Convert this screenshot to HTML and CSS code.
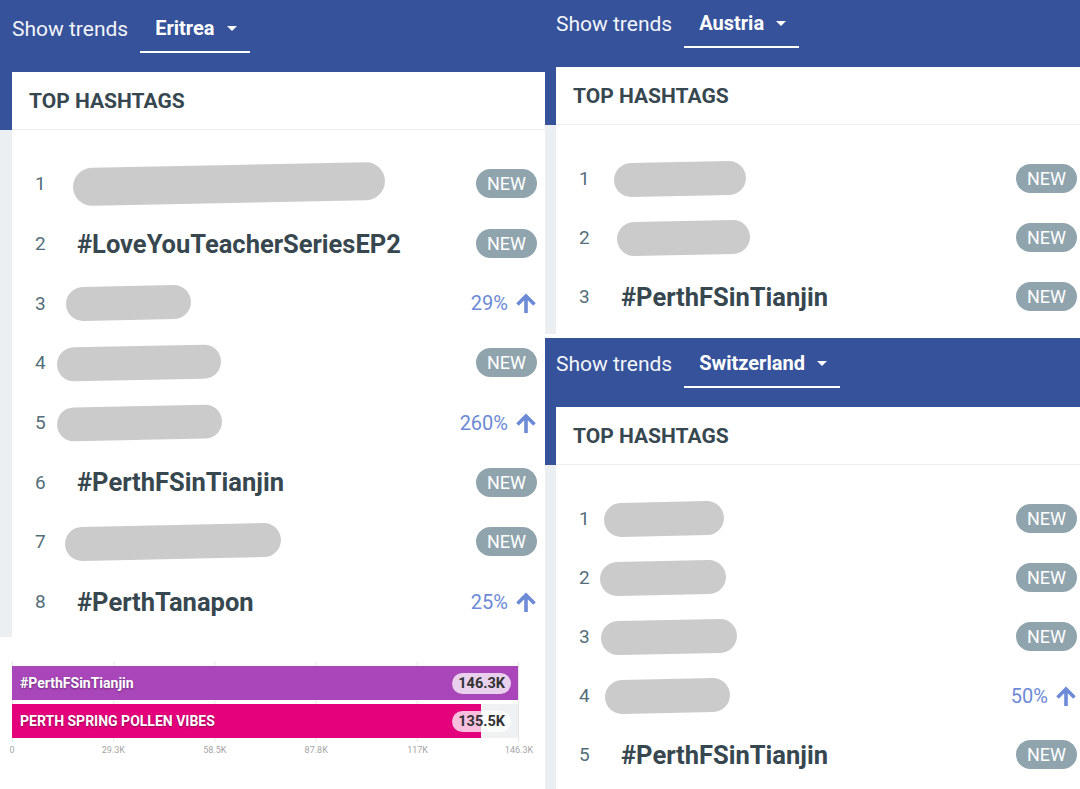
FILE: index.html
```html
<!DOCTYPE html>
<html>
<head>
	<title>Hashtag trends</title>
	<meta name="viewport" content="width=device-width, initial-scale=1">
	<link rel="stylesheet" href="styles.css">
</head>
<body>
<div class="collage">

	<!-- Left column: Eritrea + chart -->
	<div class="col col-left">
		<div class="panel panel-eritrea">
			<div class="topbar">
				<span class="show">Show trends</span>
				<span class="tab">Eritrea <i class="caret"></i></span>
			</div>
			<div class="card">
				<div class="card-head">TOP HASHTAGS</div>
				<div class="card-body">
					<div class="row"><span class="num">1</span><span class="blob" style="--x:-4px;--w:312px;--h:38px"></span><span class="badge">NEW</span></div>
					<div class="row"><span class="num">2</span><span class="tag">#LoveYouTeacherSeriesEP2</span><span class="badge">NEW</span></div>
					<div class="row"><span class="num">3</span><span class="blob" style="--x:-11px;--w:125px"></span><span class="trend">29% <svg viewBox="0 0 22 22"><path d="M11 21V4M2.5 12.5L11 4l8.5 8.5"/></svg></span></div>
					<div class="row"><span class="num">4</span><span class="blob" style="--x:-20px;--w:164px"></span><span class="badge">NEW</span></div>
					<div class="row"><span class="num">5</span><span class="blob" style="--x:-20px;--w:165px"></span><span class="trend">260% <svg viewBox="0 0 22 22"><path d="M11 21V4M2.5 12.5L11 4l8.5 8.5"/></svg></span></div>
					<div class="row"><span class="num">6</span><span class="tag">#PerthFSinTianjin</span><span class="badge">NEW</span></div>
					<div class="row"><span class="num">7</span><span class="blob" style="--x:-12px;--w:216px"></span><span class="badge">NEW</span></div>
					<div class="row"><span class="num">8</span><span class="tag">#PerthTanapon</span><span class="trend">25% <svg viewBox="0 0 22 22"><path d="M11 21V4M2.5 12.5L11 4l8.5 8.5"/></svg></span></div>
				</div>
			</div>
		</div>

		<div class="chart">
			<div class="plot">
				<div class="bar bar-purple"><span class="bar-label">#PerthFSinTianjin</span><span class="bar-value">146.3K</span></div>
				<div class="bar bar-pink" style="background: linear-gradient(to right, #e4027c 92.6%, #eff1f3 92.6%)"><span class="bar-label">PERTH SPRING POLLEN VIBES</span><span class="bar-value">135.5K</span></div>
			</div>
			<div class="axis">
				<span>0</span><span>29.3K</span><span>58.5K</span><span>87.8K</span><span>117K</span><span>146.3K</span>
			</div>
		</div>
	</div>

	<!-- Right column: Austria + Switzerland -->
	<div class="col col-right">
		<div class="panel panel-austria">
			<div class="topbar">
				<span class="show">Show trends</span>
				<span class="tab">Austria <i class="caret"></i></span>
			</div>
			<div class="card">
				<div class="card-head">TOP HASHTAGS</div>
				<div class="card-body">
					<div class="row"><span class="num">1</span><span class="blob" style="--x:-7px;--w:132px"></span><span class="badge">NEW</span></div>
					<div class="row"><span class="num">2</span><span class="blob" style="--x:-4px;--w:133px"></span><span class="badge">NEW</span></div>
					<div class="row"><span class="num">3</span><span class="tag">#PerthFSinTianjin</span><span class="badge">NEW</span></div>
				</div>
			</div>
		</div>

		<div class="panel panel-swiss">
			<div class="topbar">
				<span class="show">Show trends</span>
				<span class="tab">Switzerland <i class="caret"></i></span>
			</div>
			<div class="card">
				<div class="card-head">TOP HASHTAGS</div>
				<div class="card-body">
					<div class="row"><span class="num">1</span><span class="blob" style="--x:-17px;--w:120px"></span><span class="badge">NEW</span></div>
					<div class="row"><span class="num">2</span><span class="blob" style="--x:-21px;--w:126px"></span><span class="badge">NEW</span></div>
					<div class="row"><span class="num">3</span><span class="blob" style="--x:-20px;--w:136px"></span><span class="badge">NEW</span></div>
					<div class="row"><span class="num">4</span><span class="blob" style="--x:-16px;--w:125px"></span><span class="trend">50% <svg viewBox="0 0 22 22"><path d="M11 21V4M2.5 12.5L11 4l8.5 8.5"/></svg></span></div>
					<div class="row"><span class="num">5</span><span class="tag">#PerthFSinTianjin</span><span class="badge">NEW</span></div>
				</div>
			</div>
		</div>
	</div>

</div>
</body>
</html>
```

FILE: styles.css
```css
/* Page */
body {
  margin: 0;
  font-family: Roboto, "Liberation Sans", sans-serif;
  background: #fff;
  overflow: hidden;
}

.collage {
  display: grid;
  grid-template-columns: 545px 535px;
  width: 1080px;
  height: 789px;
  overflow: hidden;
}

.col {
  display: flex;
  flex-direction: column;
  min-height: 0;
}
.col-right {
  gap: 4px;
}

/* Trend panels */
.panel {
  background: linear-gradient(#35529a 130px, #eceff1 130px);
  display: flex;
  flex-direction: column;
  overflow: hidden;
}
.panel-eritrea { height: 637px; }
.panel-austria {
  height: 334px;
  background: linear-gradient(#35529a 125px, #eceff1 125px);
}
.panel-swiss {
  flex: 1;
  background: linear-gradient(#35529a 127px, #eceff1 127px);
}

/* Blue top bar */
.topbar {
  display: flex;
  align-items: flex-start;
  height: 72px;
  box-sizing: border-box;
  padding: 14px 0 0 12px;
  color: #fff;
}
.panel-austria .topbar { height: 67px; padding: 9px 0 0 11px; }
.panel-swiss .topbar { height: 69px; padding: 11px 0 0 11px; }

.show {
  font-size: 21px;
  line-height: 30px;
  margin-right: 12px;
  color: #f3f5fa;
}
.tab {
  display: flex;
  align-items: center;
  height: 30px;
  padding: 0 13px 8px 15px;
  border-bottom: 2.5px solid #fff;
  font-size: 20px;
  font-weight: 700;
  margin-top: -1px;
}
.caret {
  width: 0;
  height: 0;
  border-left: 5.5px solid transparent;
  border-right: 5.5px solid transparent;
  border-top: 5.5px solid #fff;
  margin-left: 12px;
}

/* Card */
.card {
  flex: 1;
  margin-left: 12px;
  background: #fff;
}
.panel-austria .card,
.panel-swiss .card { margin-left: 11px; }

.card-head {
  height: 58px;
  box-sizing: border-box;
  border-bottom: 1.5px solid #eceef0;
  padding-left: 17px;
  display: flex;
  align-items: center;
  font-size: 21px;
  font-weight: 700;
  color: #37474f;
}

.card-body {
  padding: 24px 8px 0 23px;
}
.panel-austria .card-body,
.panel-swiss .card-body { padding-right: 3px; padding-top: 24px; }

.row {
  display: flex;
  align-items: center;
  height: 59.7px;
}
.panel-austria .row,
.panel-swiss .row { height: 59px; }

.num {
  width: 42px;
  flex: none;
  font-size: 19px;
  color: #546e7a;
}
.tag {
  font-size: 25.5px;
  font-weight: 700;
  color: #37474f;
}

/* scribbled-out entries */
.blob {
  display: block;
  margin-left: var(--x);
  width: var(--w);
  height: var(--h, 34px);
  background: #cbcbcb;
  border-radius: 999px;
  transform: rotate(-1.2deg);
}

.badge {
  margin-left: auto;
  height: 29px;
  padding: 0 11px;
  border-radius: 15px;
  background: #90a4ae;
  color: #fff;
  font-size: 18px;
  line-height: 29px;
}

.trend {
  margin-left: auto;
  display: flex;
  align-items: center;
  font-size: 20px;
  color: #6c8ad6;
}
.trend svg {
  width: 22px;
  height: 22px;
  margin-left: 7px;
  fill: none;
  stroke: #6c8ad6;
  stroke-width: 3.6;
}

/* Bar chart */
.chart {
  flex: 1;
  background: #fff;
}
.plot {
  margin: 25px 0 0 12px;
  width: 507px;
  padding: 4px 0;
  display: flex;
  flex-direction: column;
  gap: 4px;
  background-image: linear-gradient(to right, #e6e6e6 1px, transparent 1px);
  background-size: 101.2px 100%;
}
.bar {
  display: flex;
  align-items: center;
  height: 34px;
  width: 506px;
  padding: 0 7px 0 8px;
  box-sizing: border-box;
}
.bar-purple { background: #a946b9; }

.bar-label {
  color: #fff;
  font-size: 14px;
  font-weight: 700;
  text-shadow: 0 1px 2px rgba(0,0,0,0.35);
}
.bar-value {
  margin-left: auto;
  background: rgba(255,255,255,0.75);
  color: #333;
  font-size: 14.5px;
  font-weight: 700;
  border-radius: 12px;
  padding: 2px 6px;
}

.axis {
  display: flex;
  justify-content: space-between;
  width: 507px;
  margin: 2px 0 0 12px;
  font-size: 9px;
  line-height: 12px;
  color: #a5a5a5;
}
.axis span {
  width: 0;
  display: flex;
  justify-content: center;
  white-space: nowrap;
}
```
